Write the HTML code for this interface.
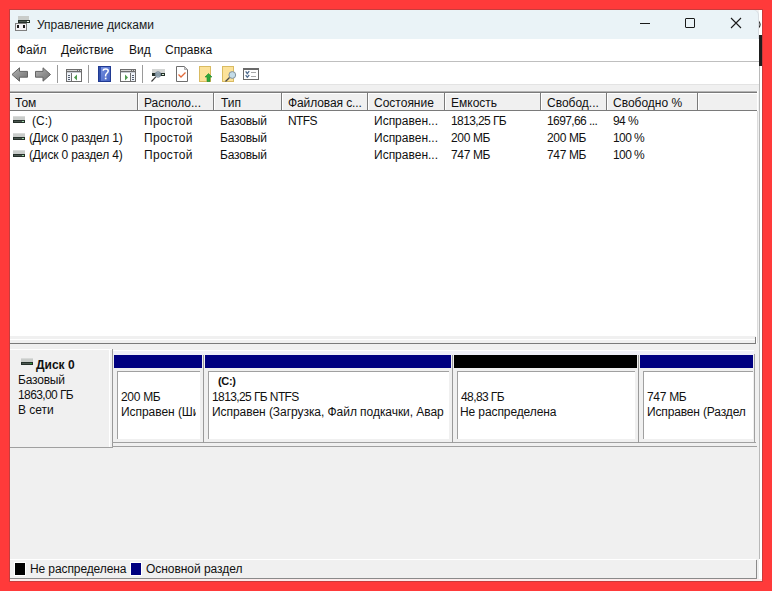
<!DOCTYPE html>
<html><head><meta charset="utf-8">
<style>
*{box-sizing:border-box}
html,body{margin:0;padding:0}
body{width:772px;height:591px;background:#FF3A3A;position:relative;overflow:hidden;font-family:"Liberation Sans",sans-serif;font-size:12px;color:#000}
.a{position:absolute}
.t{position:absolute;white-space:nowrap;line-height:14px;font-size:12px;color:#111}
.hl{position:absolute;height:1px}
.vl{position:absolute;width:1px}
.n{letter-spacing:-0.6px}
.b{font-weight:bold}
svg{position:absolute;overflow:visible}
</style></head><body>
<!-- window -->
<div class="a" style="left:9px;top:9px;width:754px;height:573px;border:1px solid #C83C3C"></div>
<div class="a" style="left:10px;top:10px;width:752px;height:571px;background:#F0F0F0"></div>
<!-- right strip -->
<div class="a" style="left:759px;top:10px;width:3px;height:571px;background:#FFFFFF"></div>
<div class="a" style="left:759px;top:35px;width:3px;height:31px;background:#1E1E1E"></div>
<svg style="left:758px;top:20px" width="4" height="9"><path d="M0.6 1Q3.6 4.5 0.6 8" fill="none" stroke="#222" stroke-width="1.1"/></svg>

<!-- title bar -->
<div class="a" style="left:10px;top:10px;width:749px;height:29px;background:#EAF3F7;border-top-right-radius:5px;box-shadow:inset -1px 0 0 #D8DDE2"></div>
<svg style="left:14px;top:15px" width="17" height="17" shape-rendering="crispEdges">
 <rect x="4" y="1" width="11" height="4" fill="#C9CCCA"/>
 <rect x="4" y="5" width="12" height="3" fill="#25302A"/>
 <rect x="5" y="6" width="8" height="1" fill="#4B5650"/>
 <rect x="13" y="6" width="2" height="1" fill="#E8F5EC"/>
 <rect x="1" y="8" width="12" height="8" fill="#7E7E7E"/>
 <rect x="2" y="9" width="10" height="6" fill="#F4F2F6"/>
 <rect x="3" y="10" width="2" height="3" fill="#1A1A1A"/>
 <rect x="9" y="10" width="2" height="3" fill="#1A1A1A"/>
</svg>
<div id="title" class="t" style="left:37px;top:18px;color:#1A1A1A">Управление дисками</div>
<!-- window controls -->
<div class="hl" style="left:640px;top:23px;width:10px;background:#1A1A1A"></div>
<div class="a" style="left:685px;top:18px;width:10px;height:10px;border:1px solid #1A1A1A;border-radius:1px"></div>
<svg style="left:730px;top:17px" width="12" height="12" viewBox="0 0 12 12"><path d="M1 1L11 11M11 1L1 11" stroke="#1A1A1A" stroke-width="1.1"/></svg>

<!-- menu bar -->
<div class="a" style="left:10px;top:39px;width:749px;height:22px;background:#FFFFFF"></div>
<div class="hl" style="left:10px;top:61px;width:749px;background:#BFBFBF"></div>
<div class="t" style="left:17px;top:43px">Файл</div>
<div class="t" style="left:61px;top:43px">Действие</div>
<div class="t" style="left:129px;top:43px">Вид</div>
<div class="t" style="left:165px;top:43px">Справка</div>

<!-- toolbar -->
<div class="a" style="left:10px;top:62px;width:749px;height:22px;background:#FFFFFF"></div>
<div class="hl" style="left:10px;top:84px;width:749px;background:#E3E3E3"></div>
<!-- back / forward -->
<svg style="left:11px;top:66px" width="18" height="17">
 <defs><linearGradient id="ag" x1="0" y1="0" x2="1" y2="1"><stop offset="0" stop-color="#B4B4B4"/><stop offset="0.6" stop-color="#8A8A8A"/><stop offset="1" stop-color="#707070"/></linearGradient></defs>
 <path d="M1 8.5L8.5 1.8V5.4H16.5V11.2H8.5V15.2Z" fill="url(#ag)" stroke="#646464" stroke-width="1" stroke-linejoin="round"/>
</svg>
<svg style="left:34px;top:66px" width="18" height="17">
 <path d="M16.5 8.5L9 1.8V5.4H1.5V11.2H9V15.2Z" fill="url(#ag)" stroke="#646464" stroke-width="1" stroke-linejoin="round"/>
</svg>
<div class="vl" style="left:57px;top:65px;height:18px;background:#9A9A9A"></div>
<!-- window icon left -->
<svg style="left:66px;top:69px" width="16" height="13" shape-rendering="crispEdges">
 <rect x="0" y="0" width="16" height="13" fill="#6E6E6E"/>
 <rect x="1" y="1" width="10" height="1" fill="#D6D6D6"/>
 <rect x="12" y="1" width="1" height="1" fill="#D6D6D6"/><rect x="14" y="1" width="1" height="1" fill="#D6D6D6"/>
 <rect x="1" y="3" width="14" height="1" fill="#C8CCD4"/>
 <rect x="1" y="4" width="4" height="8" fill="#EEF2F8"/>
 <rect x="2" y="6" width="2" height="1" fill="#556070"/><rect x="2" y="8" width="2" height="1" fill="#556070"/><rect x="2" y="10" width="2" height="1" fill="#556070"/>
 <rect x="6" y="4" width="9" height="8" fill="#FFFFFF"/>
 <path d="M8 8.5L11 5.5V11.5Z" fill="#4E9A4E" shape-rendering="auto"/>
</svg>
<div class="vl" style="left:88px;top:65px;height:18px;background:#9A9A9A"></div>
<!-- help -->
<svg style="left:98px;top:66px" width="13" height="16">
 <defs><linearGradient id="hg" x1="0" y1="0" x2="1" y2="1"><stop offset="0" stop-color="#7590E0"/><stop offset="1" stop-color="#4361C2"/></linearGradient></defs>
 <rect x="0" y="0" width="13" height="16" fill="#203A92"/>
 <rect x="1" y="1" width="2" height="14" fill="#3250AC"/>
 <rect x="3" y="1" width="9" height="14" fill="url(#hg)"/>
 <path d="M5.2 4.8C5.2 2.6 10.2 2.4 10.2 5C10.2 7 7.6 7.2 7.6 9.6V10.4" fill="none" stroke="#FFFFFF" stroke-width="1.5"/>
 <rect x="6.8" y="11.6" width="1.7" height="1.7" fill="#FFFFFF"/>
</svg>
<!-- window icon right -->
<svg style="left:120px;top:69px" width="16" height="13" shape-rendering="crispEdges">
 <rect x="0" y="0" width="16" height="13" fill="#6E6E6E"/>
 <rect x="1" y="1" width="10" height="1" fill="#D6D6D6"/>
 <rect x="12" y="1" width="1" height="1" fill="#D6D6D6"/><rect x="14" y="1" width="1" height="1" fill="#D6D6D6"/>
 <rect x="1" y="3" width="14" height="1" fill="#C8CCD4"/>
 <rect x="1" y="4" width="9" height="8" fill="#FFFFFF"/>
 <rect x="11" y="4" width="4" height="8" fill="#EEF2F8"/>
 <rect x="12" y="6" width="2" height="1" fill="#556070"/><rect x="12" y="8" width="2" height="1" fill="#556070"/><rect x="12" y="10" width="2" height="1" fill="#556070"/>
 <path d="M5 5.5L8 8.5L5 11.5Z" fill="#4E9A4E" shape-rendering="auto"/>
</svg>
<div class="vl" style="left:142px;top:65px;height:18px;background:#9A9A9A"></div>
<!-- drive + magnifier -->
<svg style="left:150px;top:68px" width="17" height="15">
 <rect x="2" y="1" width="13" height="4" fill="#D4D6D5"/>
 <rect x="2" y="5" width="13" height="3" fill="#24302A"/>
 <rect x="12" y="6" width="2" height="1" fill="#D8F0DC"/>
 <circle cx="8" cy="6.5" r="2.8" fill="#9FB2C0" fill-opacity="0.85" stroke="#708090" stroke-width="0.8"/>
 <path d="M5.8 8.8L1.5 13.5" stroke="#3A3A3A" stroke-width="1.2"/>
</svg>
<!-- document check -->
<svg style="left:176px;top:66px" width="12" height="16">
 <path d="M0.5 0.5H8.5L11.5 3.5V15.5H0.5Z" fill="#FFFFFF" stroke="#6E6E6E" stroke-width="1" stroke-linejoin="miter"/>
 <path d="M8.5 0.8V3.5H11.2Z" fill="#D8D8DE" stroke="#9A9A9A" stroke-width="0.8"/>
 <path d="M2.5 8.5L5 11L9.5 6.5" fill="none" stroke="#E26A3A" stroke-width="1.3"/>
</svg>
<!-- folder up -->
<svg style="left:199px;top:66px" width="14" height="16">
 <rect x="0.5" y="0.5" width="11" height="15" fill="#FCE29A" stroke="#D9BB62" stroke-width="1"/>
 <path d="M9.5 7.5L13 11H11V15.5H8V11H6Z" fill="#2EA83A" stroke="#1E8A2A" stroke-width="0.6"/>
</svg>
<!-- folder magnifier -->
<svg style="left:222px;top:66px" width="16" height="16">
 <rect x="0.5" y="0.5" width="11" height="15" fill="#FCE29A" stroke="#D9BB62" stroke-width="1"/>
 <path d="M7.8 11.2L3.5 15.5" stroke="#4A4A4A" stroke-width="1.3"/>
 <circle cx="10.3" cy="9" r="3.4" fill="#C4DCE8" stroke="#7A8A94" stroke-width="0.9"/>
</svg>
<!-- checklist window -->
<svg style="left:243px;top:68px" width="16" height="12" shape-rendering="crispEdges">
 <rect x="0" y="0" width="16" height="12" fill="#6A6A6A"/>
 <rect x="1" y="2" width="14" height="9" fill="#FFFFFF"/>
 <path d="M2.7 3.4L4.3 5.6L6.2 3.2M2.7 7.2L4.3 9.3L6.2 7" fill="none" stroke="#4D6A8E" stroke-width="1.3" shape-rendering="auto"/>
 <rect x="8" y="4" width="5" height="1" fill="#A8A8A8"/>
 <rect x="8" y="8" width="5" height="1" fill="#A8A8A8"/>
</svg>

<!-- list view -->
<div class="a" style="left:10px;top:91px;width:748px;height:252px;background:#FFFFFF"></div>
<!-- header -->
<div class="hl" style="left:10px;top:91px;width:747px;background:#B4B4B4"></div>
<div class="a" style="left:10px;top:92px;width:747px;height:19px;background:#F0F0F0;border-top:1px solid #7A7A7A;border-bottom:1px solid #7A7A7A"></div>
<div class="hl" style="left:10px;top:93px;width:747px;background:#FFFFFF"></div>
<div class="vl" style="left:137px;top:93px;height:17px;background:#7A7A7A"></div><div class="vl" style="left:138px;top:93px;height:17px;background:#FFFFFF"></div>
<div class="vl" style="left:213px;top:93px;height:17px;background:#7A7A7A"></div><div class="vl" style="left:214px;top:93px;height:17px;background:#FFFFFF"></div>
<div class="vl" style="left:281px;top:93px;height:17px;background:#7A7A7A"></div><div class="vl" style="left:282px;top:93px;height:17px;background:#FFFFFF"></div>
<div class="vl" style="left:367px;top:93px;height:17px;background:#7A7A7A"></div><div class="vl" style="left:368px;top:93px;height:17px;background:#FFFFFF"></div>
<div class="vl" style="left:444px;top:93px;height:17px;background:#7A7A7A"></div><div class="vl" style="left:445px;top:93px;height:17px;background:#FFFFFF"></div>
<div class="vl" style="left:540px;top:93px;height:17px;background:#7A7A7A"></div><div class="vl" style="left:541px;top:93px;height:17px;background:#FFFFFF"></div>
<div class="vl" style="left:606px;top:93px;height:17px;background:#7A7A7A"></div><div class="vl" style="left:607px;top:93px;height:17px;background:#FFFFFF"></div>
<div class="vl" style="left:697px;top:93px;height:17px;background:#7A7A7A"></div><div class="vl" style="left:698px;top:93px;height:17px;background:#FFFFFF"></div>
<div class="t" style="left:15px;top:96px">Том</div>
<div class="t" style="left:144px;top:96px">Располо...</div>
<div class="t" style="left:221px;top:96px">Тип</div>
<div class="t" style="left:288px;top:96px;letter-spacing:-0.1px">Файловая с...</div>
<div class="t" style="left:374px;top:96px;letter-spacing:0px">Состояние</div>
<div class="t" style="left:451px;top:96px;letter-spacing:0px">Емкость</div>
<div class="t" style="left:547px;top:96px;letter-spacing:0px">Свобод...</div>
<div class="t" style="left:613px;top:96px;letter-spacing:0px">Свободно %</div>

<!-- rows -->
<svg style="left:13px;top:116px" width="12" height="7" shape-rendering="crispEdges">
 <rect x="0" y="0" width="12" height="4" fill="#C9CCCA"/><rect x="0" y="0" width="12" height="1" fill="#D8DAD9"/>
 <rect x="0" y="4" width="12" height="3" fill="#25302A"/><rect x="1" y="5" width="8" height="1" fill="#4B5650"/><rect x="9" y="5" width="2" height="1" fill="#9ED8A8"/>
</svg>
<svg style="left:13px;top:133px" width="12" height="7" shape-rendering="crispEdges">
 <rect x="0" y="0" width="12" height="4" fill="#C9CCCA"/><rect x="0" y="0" width="12" height="1" fill="#D8DAD9"/>
 <rect x="0" y="4" width="12" height="3" fill="#25302A"/><rect x="1" y="5" width="8" height="1" fill="#4B5650"/><rect x="9" y="5" width="2" height="1" fill="#9ED8A8"/>
</svg>
<svg style="left:13px;top:150px" width="12" height="7" shape-rendering="crispEdges">
 <rect x="0" y="0" width="12" height="4" fill="#C9CCCA"/><rect x="0" y="0" width="12" height="1" fill="#D8DAD9"/>
 <rect x="0" y="4" width="12" height="3" fill="#25302A"/><rect x="1" y="5" width="8" height="1" fill="#4B5650"/><rect x="9" y="5" width="2" height="1" fill="#9ED8A8"/>
</svg>
<div class="t" style="left:32px;top:114px">(C:)</div>
<div class="t" style="left:29px;top:131px;letter-spacing:-0.15px">(Диск 0 раздел 1)</div>
<div class="t" style="left:29px;top:148px;letter-spacing:-0.15px">(Диск 0 раздел 4)</div>
<div class="t" style="left:144px;top:114px;letter-spacing:0.3px">Простой</div>
<div class="t" style="left:144px;top:131px;letter-spacing:0.3px">Простой</div>
<div class="t" style="left:144px;top:148px;letter-spacing:0.3px">Простой</div>
<div class="t" style="left:220px;top:114px;letter-spacing:-0.2px">Базовый</div>
<div class="t" style="left:220px;top:131px;letter-spacing:-0.2px">Базовый</div>
<div class="t" style="left:220px;top:148px;letter-spacing:-0.2px">Базовый</div>
<div class="t" style="left:288px;top:114px;letter-spacing:-0.6px">NTFS</div>
<div class="t" style="left:374px;top:114px;letter-spacing:0px">Исправен...</div>
<div class="t" style="left:374px;top:131px;letter-spacing:0px">Исправен...</div>
<div class="t" style="left:374px;top:148px;letter-spacing:0px">Исправен...</div>
<div class="t n" style="left:451px;top:114px">1813,25 ГБ</div>
<div class="t n" style="left:451px;top:131px;letter-spacing:-0.35px">200 МБ</div>
<div class="t n" style="left:451px;top:148px;letter-spacing:-0.35px">747 МБ</div>
<div class="t n" style="left:547px;top:114px">1697,66 ...</div>
<div class="t n" style="left:547px;top:131px;letter-spacing:-0.35px">200 МБ</div>
<div class="t n" style="left:547px;top:148px;letter-spacing:-0.35px">747 МБ</div>
<div class="t n" style="left:613px;top:114px">94 %</div>
<div class="t n" style="left:613px;top:131px">100 %</div>
<div class="t n" style="left:613px;top:148px">100 %</div>

<!-- list bottom -->
<div class="a" style="left:10px;top:336px;width:746px;height:7px;background:#F0F0F0"></div>
<div class="hl" style="left:10px;top:339px;width:746px;background:#FFFFFF"></div>
<div class="hl" style="left:10px;top:343px;width:746px;background:#7A7A7A"></div>
<div class="vl" style="left:755px;top:337px;height:7px;background:#7A7A7A"></div>
<div class="vl" style="left:757px;top:111px;height:232px;background:#DCDCDC"></div>
<div class="vl" style="left:759px;top:66px;height:493px;background:#B8B8B8"></div>

<!-- disk label box -->
<div class="a" style="left:10px;top:349px;width:103px;height:99px;border-top:1px solid #FFFFFF;border-bottom:1px solid #A0A0A0;background:#F0F0F0"></div>
<div class="vl" style="left:109px;top:350px;height:97px;background:#FFFFFF"></div>
<svg style="left:21px;top:358px" width="12" height="7" shape-rendering="crispEdges">
 <rect x="0" y="0" width="12" height="4" fill="#C9CCCA"/><rect x="0" y="0" width="12" height="1" fill="#D8DAD9"/>
 <rect x="0" y="4" width="12" height="3" fill="#25302A"/><rect x="1" y="5" width="8" height="1" fill="#4B5650"/><rect x="9" y="5" width="2" height="1" fill="#2F9A3F"/>
</svg>
<div class="t b" style="left:36px;top:358px">Диск 0</div>
<div class="t" style="left:18px;top:373px;letter-spacing:-0.2px">Базовый</div>
<div class="t n" style="left:18px;top:388px">1863,00 ГБ</div>
<div class="t" style="left:18px;top:403px">В сети</div>

<!-- partitions -->
<div class="a" style="left:112px;top:350px;width:644px;height:97px;background:#F0F0F0"></div>
<div class="vl" style="left:112px;top:349px;height:98px;background:#999999"></div>
<div class="hl" style="left:112px;top:442px;width:644px;background:#A0A0A0"></div>
<div class="hl" style="left:112px;top:446px;width:645px;background:#A0A0A0"></div>
<div class="vl" style="left:754px;top:354px;height:89px;background:#A0A0A0"></div>
<div class="vl" style="left:203px;top:354px;height:89px;background:#9A9A9A"></div>
<div class="vl" style="left:452px;top:354px;height:89px;background:#9A9A9A"></div>
<div class="vl" style="left:638px;top:354px;height:89px;background:#9A9A9A"></div>
<div class="hl" style="left:113px;top:350px;width:641px;background:#FFFFFF"></div>
<div class="a" style="left:113px;top:351px;width:641px;height:4px;background:#F0F0F8"></div>
<!-- headers -->
<div class="a" style="left:114px;top:355px;width:88px;height:13px;background:#000080"></div>
<div class="a" style="left:205px;top:355px;width:246px;height:13px;background:#000080"></div>
<div class="a" style="left:454px;top:355px;width:183px;height:13px;background:#000000"></div>
<div class="a" style="left:640px;top:355px;width:113px;height:13px;background:#000080"></div>
<!-- inner boxes -->
<div class="a" style="left:117px;top:371px;width:83px;height:68px;background:#FFFFFF;border-top:1px solid #A0A0A0;border-left:1px solid #A0A0A0"></div>
<div class="a" style="left:208px;top:371px;width:241px;height:68px;background:#FFFFFF;border-top:1px solid #A0A0A0;border-left:1px solid #A0A0A0"></div>
<div class="a" style="left:457px;top:371px;width:178px;height:68px;background:#FFFFFF;border-top:1px solid #A0A0A0;border-left:1px solid #A0A0A0"></div>
<div class="a" style="left:643px;top:371px;width:110px;height:68px;background:#FFFFFF;border-top:1px solid #A0A0A0;border-left:1px solid #A0A0A0"></div>
<!-- partition text -->
<div class="t n" style="left:121px;top:390px;letter-spacing:-0.3px">200 МБ</div>
<div class="a" style="left:121px;top:403px;width:75px;height:16px;overflow:hidden"><div class="t" style="left:0;top:2px;letter-spacing:-0.05px">Исправен (Шифрованный</div></div>
<div class="t b" style="left:218px;top:374px;font-size:11px;letter-spacing:-0.3px">(C:)</div>
<div class="t n" style="left:212px;top:390px">1813,25 ГБ NTFS</div>
<div class="a" style="left:212px;top:403px;width:232px;height:16px;overflow:hidden"><div class="t" style="left:0;top:2px;letter-spacing:-0.05px">Исправен (Загрузка, Файл подкачки, Аварийный</div></div>
<div class="t n" style="left:461px;top:390px">48,83 ГБ</div>
<div class="t" style="left:460px;top:405px;letter-spacing:-0.1px">Не распределена</div>
<div class="t n" style="left:647px;top:390px;letter-spacing:-0.3px">747 МБ</div>
<div class="a" style="left:647px;top:403px;width:100px;height:16px;overflow:hidden"><div class="t" style="left:0;top:2px;letter-spacing:-0.15px">Исправен (Раздел</div></div>

<!-- legend -->
<div class="hl" style="left:10px;top:559px;width:746px;background:#FFFFFF"></div>
<div class="hl" style="left:10px;top:578px;width:747px;background:#8A8A8A"></div>
<div class="vl" style="left:756px;top:560px;height:19px;background:#8A8A8A"></div>
<div class="hl" style="left:10px;top:579px;width:752px;height:2px;background:#FCEAEA"></div>
<div class="a" style="left:14px;top:562px;width:12px;height:14px;background:#000;border:1px solid #FFFFFF"></div>
<div class="t" style="left:30px;top:562px;letter-spacing:-0.1px">Не распределена</div>
<div class="a" style="left:130px;top:562px;width:12px;height:14px;background:#000080;border:1px solid #FFFFFF"></div>
<div class="t" style="left:146px;top:562px;letter-spacing:-0.05px">Основной раздел</div>
</body></html>
